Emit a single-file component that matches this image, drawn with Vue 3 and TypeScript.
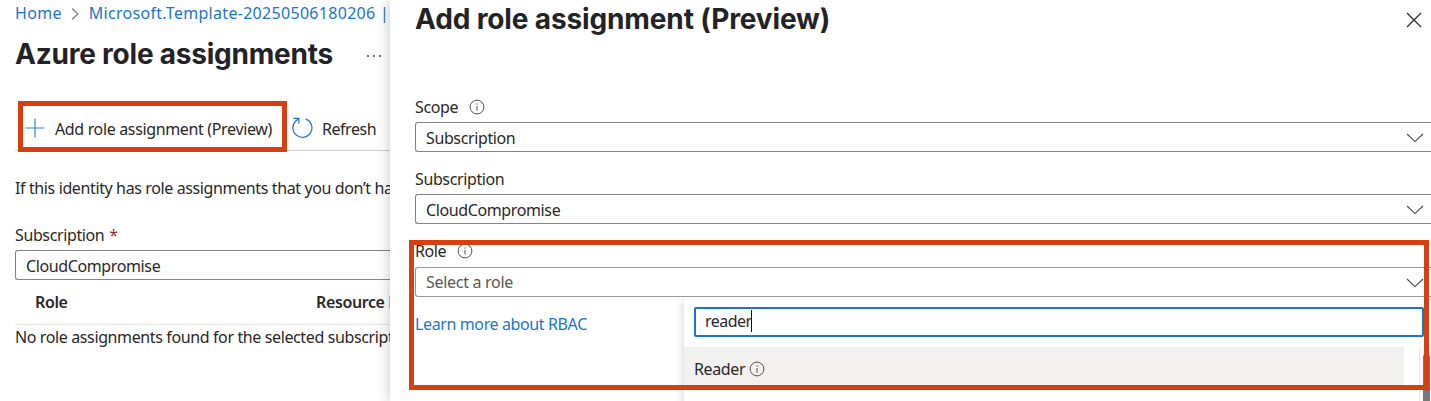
<script setup lang="ts">
import { ref } from 'vue'

interface Field {
  label: string
  value: string
  info: boolean
  placeholder?: boolean
}

const fields: Field[] = [
  { label: 'Scope', value: 'Subscription', info: true },
  { label: 'Subscription', value: 'CloudCompromise', info: false },
  { label: 'Role', value: 'Select a role', info: true, placeholder: true },
]
const query = ref('reader')
</script>

<template>
  <div class="portal">
    <main class="blade">
      <nav class="crumbs">
        <a>Home</a>
        <svg class="sep" width="8" height="12" viewBox="0 0 8 12"><path d="M1 .5l6 5.5-6 5.5" /></svg>
        <a>Microsoft.Template-20250506180206 |</a>
      </nav>
      <header class="heading">
        <h1>Azure role assignments</h1>
        <svg class="more" width="16" height="4" viewBox="0 0 16 4">
          <circle cx="2" cy="2" r="0.9" /><circle cx="8" cy="2" r="0.9" /><circle cx="14" cy="2" r="0.9" />
        </svg>
      </header>
      <div class="toolbar">
        <svg class="plus" width="20" height="20" viewBox="0 0 20 20"><path d="M10 .5v19M.5 10h19" /></svg>
        <span class="add">Add role assignment (Preview)</span>
        <svg class="refresh" width="22" height="22" viewBox="0 0 22 22">
          <path d="M14.6 1.9A9.5 9.5 0 1 1 4.9 3.9L7.6 1.5M2.2 1.4h5.6v5.2" />
        </svg>
        <span class="reload">Refresh</span>
      </div>
      <p class="notice">If this identity has role assignments that you don’t have</p>
      <div class="label"><span>Subscription</span><span class="star">*</span></div>
      <div class="select"><span>CloudCompromise</span></div>
      <div class="thead"><span class="role">Role</span><span>Resource Name</span></div>
      <p class="empty">No role assignments found for the selected subscription.</p>
    </main>

    <aside class="panel">
      <header class="panel-head">
        <h2>Add role assignment (Preview)</h2>
        <svg class="close" width="16" height="16" viewBox="0 0 16 16"><path d="M1 1l14 14M15 1L1 15" /></svg>
      </header>
      <section v-for="f in fields" :key="f.label" class="field">
        <div class="label">
          <span>{{ f.label }}</span>
          <svg v-if="f.info" class="info" width="16" height="16" viewBox="0 0 16 16">
            <circle cx="8" cy="8" r="6.9" /><path d="M8 7v4.6M8 4.4v1.3" />
          </svg>
        </div>
        <div class="select" :class="{ muted: f.placeholder }">
          <span>{{ f.value }}</span>
          <svg class="chevron" width="18" height="10" viewBox="0 0 18 10"><path d="M1 1l8 7.6L17 1" /></svg>
        </div>
      </section>
      <a class="learn">Learn more about RBAC</a>

      <div class="dropdown">
        <div class="search"><span>{{ query }}</span><i class="caret"></i></div>
        <div class="results">
          <div class="option">
            <span>Reader</span>
            <svg class="info" width="16" height="16" viewBox="0 0 16 16">
              <circle cx="8" cy="8" r="6.9" /><path d="M8 7v4.6M8 4.4v1.3" />
            </svg>
          </div>
          <div class="track"><div class="thumb"></div></div>
        </div>
      </div>
    </aside>

    <div class="mark mark-add"></div>
    <div class="mark mark-role"></div>
  </div>
</template>

<style>
html, body { margin: 0; overflow: hidden; background: #fff; }
</style>

<style scoped>
.portal {
  position: relative;
  display: flex;
  width: 1431px;
  height: 401px;
  overflow: hidden;
  background: #fff;
  color: #292827;
  font: 16px/22px "Noto Sans", "Open Sans", sans-serif;
  letter-spacing: -0.38px;
  white-space: nowrap;
}
.portal * { box-sizing: border-box; }
svg { flex: none; fill: none; stroke: #4a4948; stroke-width: 1.1; }
p, h1, h2 { margin: 0; }
h1, h2 {
  color: #232326;
  font: 700 28px/36px Inter, sans-serif;
  letter-spacing: -0.22px;
}
h2 { margin-top: 1px; letter-spacing: -0.13px; }
a { color: #1a75cf; }

.blade { width: 390px; padding-left: 15px; overflow: hidden; flex: none; }
.crumbs { display: flex; align-items: center; height: 26px; letter-spacing: 0.3px; }
.sep { margin: 1px 10px 0 9px; stroke: #777; }
.heading { display: flex; align-items: center; height: 56px; }
.more { margin: 3px 0 0 33px; fill: #333; stroke: none; }
.toolbar {
  display: flex;
  align-items: center;
  height: 43px;
  margin-top: 26px;
  padding-left: 10px;
  border-bottom: 1px solid #cfcdcb;
}
.plus { margin-top: -2px; stroke: #3584d6; stroke-width: 1.2; }
.add { margin-left: 10px; letter-spacing: -0.35px; }
.refresh { margin: -2px 0 0 19px; stroke: #2179d2; stroke-width: 1.3; }
.reload { margin-left: 9px; letter-spacing: -0.45px; }
.notice { margin-top: 26px; }
.blade > .label { margin-top: 25px; }
.star { margin-left: 5px; color: #a4262c; }
.label { display: flex; align-items: center; height: 22px; }
.select {
  display: flex;
  align-items: center;
  height: 30px;
  padding: 2px 0 0 10px;
  border: 1px solid #858381;
  border-right: 0;
  border-radius: 3px 0 0 3px;
}
.blade .select { margin-top: 4px; }
.thead {
  display: flex;
  height: 45px;
  padding: 11px 0 0 20px;
  border-bottom: 1px solid #e6e5e4;
  font-weight: 600;
}
.role { flex: none; width: 281px; }
.empty { margin-top: 1px; }

.panel {
  position: relative;
  width: 1041px;
  padding-left: 25px;
  background: #fff;
  box-shadow: 0 0 14px rgba(0, 0, 0, 0.24);
}
.panel-head { display: flex; justify-content: space-between; height: 96px; }
.close { margin: 12px 9px 0 0; stroke: #333236; stroke-width: 1.4; }
.field { height: 72px; }
.field .select { margin-top: 4px; }
.info { margin-left: 11px; stroke: #51504f; stroke-width: 1; }
.chevron { margin: -1px 7px 0 auto; }
.field .select.muted { margin-top: 5px; padding-top: 0; color: #595756; border-color: #999795; letter-spacing: -0.3px; }
.muted .chevron { margin-top: 1px; }
.learn { display: block; width: max-content; margin-top: 1px; }

.dropdown {
  position: absolute;
  top: 297px;
  left: 294px;
  width: 747px;
  height: 110px;
  padding-top: 10px;
  background: #fff;
  box-shadow: 0 3px 10px rgba(0, 0, 0, 0.18);
  clip-path: inset(0 0 0 -12px);
}
.search {
  display: flex;
  align-items: center;
  width: 730px;
  height: 30px;
  margin-left: 10px;
  padding: 0 0 2px 9px;
  border: 2px solid #1b75d0;
  border-radius: 2px;
  letter-spacing: -0.55px;
}
.caret { width: 1px; height: 22px; background: #111; }
.results { display: flex; justify-content: space-between; height: 60px; margin-top: 10px; }
.option {
  display: flex;
  align-items: center;
  width: 720px;
  height: 43px;
  padding-left: 10px;
  background: #f2f1ef;
}
.option .info { margin-left: 4px; }
.track { width: 12px; padding: 7px 1px 0 3px; border-left: 1px solid #e6e6e6; background: #fafafa; }
.thumb { height: 60px; background: #777; border-radius: 3px 3px 0 0; }

.mark { position: absolute; border: 5px solid #d73f10; }
.mark-add { left: 18px; top: 101px; width: 269px; height: 51px; }
.mark-role { left: 409px; top: 240px; width: 1020px; height: 150px; }
</style>
